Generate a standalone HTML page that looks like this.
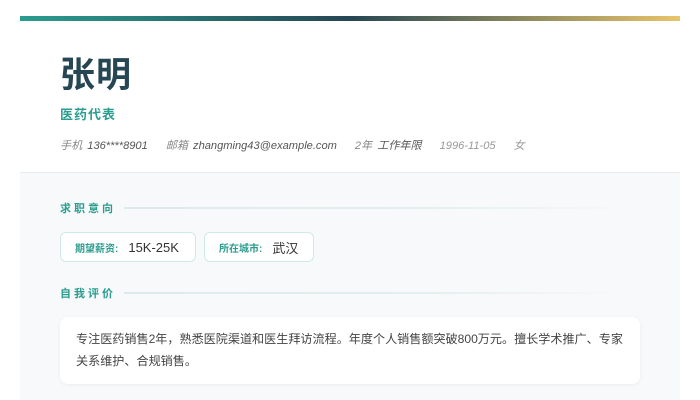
<!DOCTYPE html>
<html><head><meta charset="utf-8"><style>
*{margin:0;padding:0;box-sizing:border-box}
body{width:700px;height:400px;background:#fff;font-family:"Liberation Sans","Noto Sans CJK SC",sans-serif;overflow:hidden;position:relative}
.wrap{position:absolute;left:20px;top:16px;width:660px;height:384px}
.bar{height:5px;background:linear-gradient(90deg,#2a9d8f 0%,#264653 50%,#e9c46a 100%)}
.head{height:152px;position:relative;border-bottom:1px solid #e8ecef}
.name{position:absolute;left:40px;top:32px;font-size:35px;font-weight:bold;color:#264653;letter-spacing:1px;line-height:46px}
.title{position:absolute;left:40px;top:83px;font-size:13px;font-weight:bold;color:#2a9d8f;letter-spacing:1px}
.contact{position:absolute;left:40px;top:116px;font-size:11.1px;font-style:italic;color:#555;white-space:nowrap}
.contact span{margin-right:18px}
.contact .l{color:#888;margin-right:2px}
.body{background:#f7f9fa;height:227px;position:relative}
.sh{position:absolute;left:40px;font-size:11px;font-weight:bold;color:#2a9d8f;letter-spacing:3px;display:flex;align-items:center}
.sh i{display:block;width:500px;height:2px;margin-left:8px;background:linear-gradient(90deg,#dcebea 0%,#e3efee 60%,rgba(227,239,238,0))}
.tag{position:absolute;top:59px;height:30px;background:#fff;border:1px solid #cfeae6;border-radius:6px;display:flex;align-items:center;padding-left:14px}
.tag b{font-size:10px;color:#2a9d8f;margin-right:10px}
.tag em{font-style:normal;font-size:13px;color:#333}
.card{position:absolute;left:40px;top:144px;width:580px;height:67px;background:#fff;border-radius:8px;box-shadow:0 1px 4px rgba(0,0,0,.05);padding:11px 10px 11px 16px;font-size:12.1px;line-height:22px;color:#444;white-space:nowrap}
</style></head><body>
<div class="wrap">
<div class="bar"></div>
<div class="head">
<div class="name">张明</div>
<div class="title">医药代表</div>
<div class="contact"><span><span class="l">手机</span> 136****8901</span><span><span class="l">邮箱</span> zhangming43@example.com</span><span><span class="l">2年</span> 工作年限</span><span style="color:#999">1996-11-05</span><span style="color:#999">女</span></div>
</div>
<div class="body">
<div class="sh" style="top:27px">求职意向<i></i></div>
<div class="tag" style="left:40px;width:136px"><b>期望薪资:</b><em>15K-25K</em></div>
<div class="tag" style="left:184px;width:110px"><b>所在城市:</b><em>武汉</em></div>
<div class="sh" style="top:112px">自我评价<i></i></div>
<div class="card">专注医药销售2年，熟悉医院渠道和医生拜访流程。年度个人销售额突破800万元。擅长学术推广、专家<br>关系维护、合规销售。</div>
</div>
</div>
</body></html>
